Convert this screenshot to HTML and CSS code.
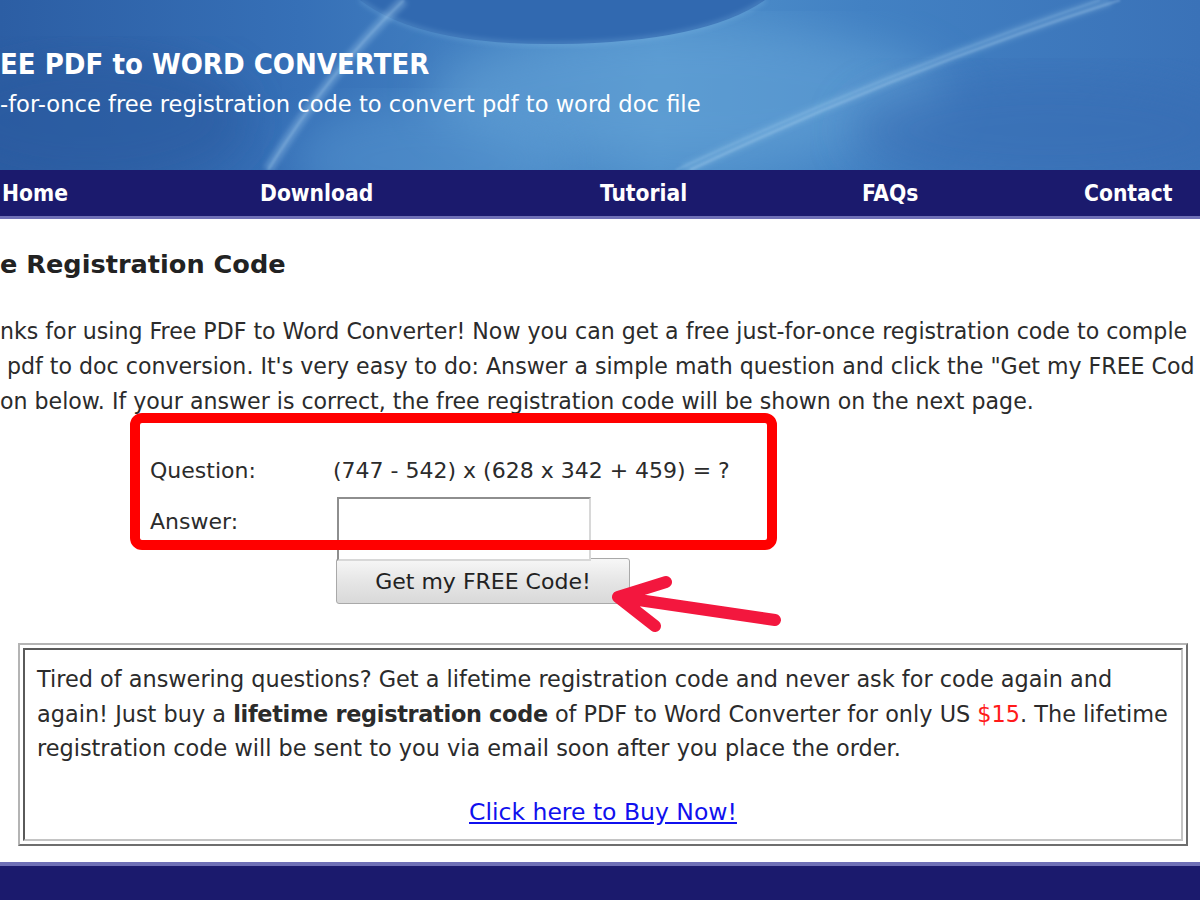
FILE: index.html
```html
<!DOCTYPE html>
<html>
<head>
<meta charset="utf-8">
<link rel="stylesheet" href="styles.css">
</head>
<body>
<div class="page">
  <header class="banner">
    <svg class="banner-art" width="1200" height="170" viewBox="0 0 1200 170">
      <defs>
        <linearGradient id="base" x1="0" y1="0" x2="1" y2="0">
          <stop offset="0" stop-color="#2c5ea4"/>
          <stop offset="0.25" stop-color="#3670b7"/>
          <stop offset="0.55" stop-color="#4f90cb"/>
          <stop offset="0.72" stop-color="#4281c3"/>
          <stop offset="1" stop-color="#3a72b8"/>
        </linearGradient>
        <filter id="blur20"><feGaussianBlur stdDeviation="22"/></filter>
        <filter id="blur3"><feGaussianBlur stdDeviation="2.5"/></filter>
        <filter id="blur1"><feGaussianBlur stdDeviation="1.2"/></filter>
      </defs>
      <rect width="1200" height="170" fill="url(#base)"/>
      <ellipse cx="690" cy="95" rx="260" ry="70" fill="#6aa9da" opacity="0.5" filter="url(#blur20)"/>
      <ellipse cx="430" cy="160" rx="140" ry="60" fill="#5f9fd6" opacity="0.4" filter="url(#blur20)"/>
      <ellipse cx="90" cy="120" rx="160" ry="70" fill="#2a5a9f" opacity="0.6" filter="url(#blur20)"/>
      <ellipse cx="1050" cy="130" rx="200" ry="60" fill="#376db4" opacity="0.6" filter="url(#blur20)"/>
      <path d="M360 0 Q 420 46 560 44 Q 705 42 765 0 Z" fill="#3169b0"/>
      <path d="M360 0 Q 420 46 560 44 Q 705 42 765 0" fill="none" stroke="#8cc3ec" stroke-opacity="0.3" stroke-width="4" filter="url(#blur3)"/>
      <path d="M404 0 Q 330 70 268 170" fill="none" stroke="#a8d4f4" stroke-opacity="0.3" stroke-width="10" filter="url(#blur3)"/>
      <path d="M404 0 Q 330 70 268 170" fill="none" stroke="#c4e3f8" stroke-opacity="0.25" stroke-width="2" filter="url(#blur1)"/>
      <path d="M1120 0 Q 900 70 690 170" fill="none" stroke="#b8dcf6" stroke-opacity="0.3" stroke-width="2.5" filter="url(#blur1)"/>
      <path d="M1100 0 Q 880 75 676 170" fill="none" stroke="#b8dcf6" stroke-opacity="0.22" stroke-width="2" filter="url(#blur1)"/>
      <path d="M1110 0 Q 890 72 684 170" fill="none" stroke="#a5d0f2" stroke-opacity="0.2" stroke-width="12" filter="url(#blur3)"/>
    </svg>
    <div class="banner-text">
      <h1 class="title">EE PDF to WORD CONVERTER</h1>
      <p class="subtitle">-for-once free registration code to convert pdf to word doc file</p>
    </div>
  </header>
  <nav class="nav">
    <a class="nav-item">Home</a>
    <a class="nav-item">Download</a>
    <a class="nav-item">Tutorial</a>
    <a class="nav-item">FAQs</a>
    <a class="nav-item">Contact</a>
  </nav>
  <main class="main">
    <h2 class="heading">e Registration Code</h2>
    <p class="intro">nks for using Free PDF to Word Converter! Now you can get a free just-for-once registration code to comple<br>&nbsp;pdf to doc conversion. It's very easy to do: Answer a simple math question and click the "Get my FREE Cod<br>on below. If your answer is correct, the free registration code will be shown on the next page.</p>
    <div class="quiz">
      <div class="quiz-row q">
        <span class="quiz-label">Question:</span>
        <span class="quiz-value">(747 - 542) x (628 x 342 + 459) = ?</span>
      </div>
      <div class="quiz-row a">
        <span class="quiz-label">Answer:</span>
        <span class="answer-input"></span>
      </div>
      <div class="highlight"></div>
    </div>
    <div class="btn-row">
      <button class="btn">Get my FREE Code!</button>
    </div>
    <svg class="arrow" width="200" height="70" viewBox="600 570 200 70">
      <path d="M775 620 L618 597 M618 597 L666 582 M618 597 L655 626" fill="none" stroke="#f3173e" stroke-width="12" stroke-linecap="round" stroke-linejoin="round"/>
    </svg>
    <div class="offer">
      <div class="offer-inner">
        <p class="offer-text">Tired of answering questions? Get a lifetime registration code and never ask for code again and<br>again! Just buy a <b>lifetime registration code</b> of PDF to Word Converter for only US <span class="price">$15</span>. The lifetime<br>registration code will be sent to you via email soon after you place the order.</p>
        <p class="offer-link"><a href="#">Click here to Buy Now!</a></p>
      </div>
    </div>
  </main>
  <footer class="footer"></footer>
</div>
</body>
</html>
```
FILE: styles.css
```css
html, body {
  margin: 0;
  padding: 0;
  background: #ffffff;
}
.page {
  position: relative;
  width: 1200px;
  height: 900px;
  overflow: hidden;
  font-family: "DejaVu Sans", sans-serif;
  color: #2b2b2b;
}
.banner {
  height: 170px;
  display: grid;
  overflow: hidden;
  color: #fff;
}
.banner-art,
.banner-text {
  grid-area: 1 / 1;
}
.banner-art {
  display: block;
}
.banner-text {
  padding-top: 45px;
}
.title {
  margin: 0;
  font-size: 29px;
  line-height: 38px;
  font-weight: bold;
  font-stretch: condensed;
}
.subtitle {
  margin: 6px 0 0 0;
  font-size: 22.6px;
  line-height: 30px;
  white-space: nowrap;
}
.nav {
  height: 46px;
  background: #1b1a6d;
  border-bottom: 3px solid #6f70b6;
  display: grid;
  grid-template-columns: 258px 340px 262px 222px 1fr;
  padding-left: 2px;
  align-items: center;
}
.nav-item {
  color: #fff;
  font-weight: bold;
  font-stretch: condensed;
  font-size: 22.6px;
  line-height: 46px;
}
.main {
  position: relative;
  padding-top: 28px;
}
.heading {
  margin: 0;
  font-size: 25.6px;
  line-height: 34px;
  font-weight: bold;
  color: #222;
}
.intro {
  margin: 33px 0 0 0;
  font-size: 22.1px;
  line-height: 35px;
  white-space: nowrap;
}
.quiz {
  position: relative;
  margin: -6px 0 0 130px;
  width: 647px;
  height: 137px;
}
.quiz-row {
  display: flex;
  align-items: center;
  padding-left: 20px;
  font-size: 22px;
}
.quiz-row.q {
  padding-top: 40px;
  height: 34px;
}
.quiz-row.a {
  margin-top: 10px;
  height: 53px;
  align-items: flex-start;
}
.quiz-label {
  width: 183px;
}
.quiz-row.a .quiz-label {
  padding-top: 12px;
  width: 187px;
}
.answer-input {
  display: block;
  width: 250px;
  height: 60px;
  border: 2px solid #8e8e8e;
  border-right-color: #d8d8d8;
  border-bottom-color: #d8d8d8;
  background: #fff;
}
.highlight {
  position: absolute;
  left: 0;
  top: 0;
  width: 627px;
  height: 117px;
  border: 10px solid #ff0000;
  border-radius: 12px;
}
.btn-row {
  margin: 8px 0 0 336px;
}
.btn {
  width: 294px;
  height: 46px;
  border: 1px solid #a9a9a9;
  border-radius: 3px;
  background: linear-gradient(#f7f7f7, #e6e6e6 50%, #d9d9d9);
  font-family: "DejaVu Sans", sans-serif;
  font-size: 22px;
  color: #222;
  padding: 0;
}
.arrow {
  position: absolute;
  left: 600px;
  top: 351px;
}
.offer {
  margin: 39px 12px 0 18px;
  height: 203px;
  box-sizing: border-box;
  border: 2px solid;
  border-color: #b4b4b4 #6e6e6e #6e6e6e #b4b4b4;
  padding: 3px;
}
.offer-inner {
  height: 100%;
  box-sizing: border-box;
  border: 2px solid;
  border-color: #5a5a5a #c4c4c4 #c4c4c4 #5a5a5a;
  padding: 12px 0 0 12px;
}
.offer-text {
  margin: 0;
  font-size: 22.4px;
  line-height: 34.5px;
  white-space: nowrap;
}
.offer-text b {
  letter-spacing: -0.3px;
}
.price {
  color: #ff1a1a;
}
.offer-link {
  margin: 29px 0 0 0;
  text-align: center;
  font-size: 23.5px;
  line-height: 34px;
  padding-right: 12px;
}
.offer-link a {
  color: #1010ee;
}
.footer {
  position: absolute;
  left: 0;
  top: 862px;
  width: 1200px;
  height: 38px;
  background: #1b1a6d;
  border-top: 4px solid #6f70b6;
}
```
